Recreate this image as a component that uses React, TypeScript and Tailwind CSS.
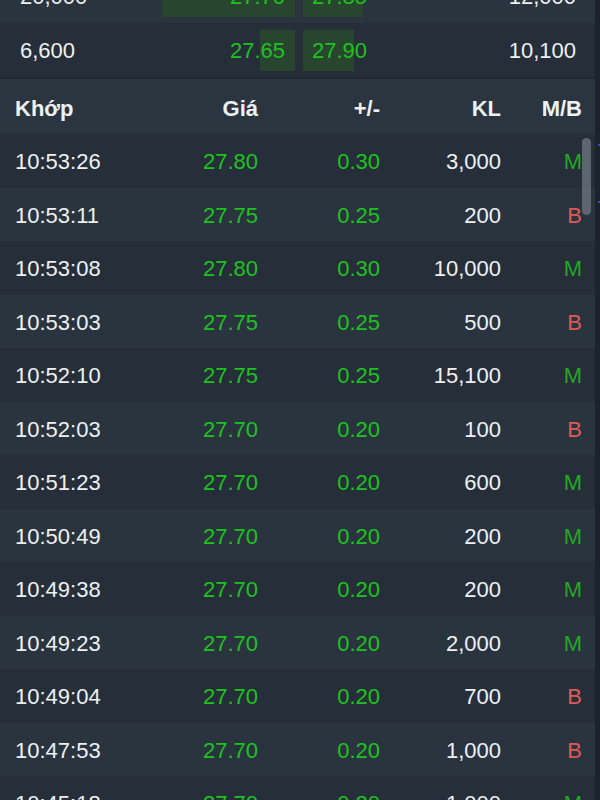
const book = [
  { bidVol: '20,000', bid: '27.70', bidBar: 133, ask: '27.85', askBar: 60, askVol: '12,000' },
  { bidVol: '6,600', bid: '27.65', bidBar: 35, ask: '27.90', askBar: 51, askVol: '10,100' },
];

const trades = [
  ['10:53:26', '27.80', '0.30', '3,000', 'M'],
  ['10:53:11', '27.75', '0.25', '200', 'B'],
  ['10:53:08', '27.80', '0.30', '10,000', 'M'],
  ['10:53:03', '27.75', '0.25', '500', 'B'],
  ['10:52:10', '27.75', '0.25', '15,100', 'M'],
  ['10:52:03', '27.70', '0.20', '100', 'B'],
  ['10:51:23', '27.70', '0.20', '600', 'M'],
  ['10:50:49', '27.70', '0.20', '200', 'M'],
  ['10:49:38', '27.70', '0.20', '200', 'M'],
  ['10:49:23', '27.70', '0.20', '2,000', 'M'],
  ['10:49:04', '27.70', '0.20', '700', 'B'],
  ['10:47:53', '27.70', '0.20', '1,000', 'B'],
  ['10:45:18', '27.70', '0.20', '1,000', 'M'],
];

const tradeGrid = 'grid grid-cols-[135px_108px_122px_121px_81px] items-center pl-[15px]';

export default function App() {
  return (
    <div
      className="relative h-[800px] w-[600px] overflow-hidden bg-[#262f39] text-[22px] text-[#eef0f2] flex"
      style={{ fontFamily: '"Liberation Sans", Arial, sans-serif' }}
    >
      <div className="flex-1 min-w-0">
        {/* Order book */}
        <div className="-mt-[31px]">
          {book.map((r, i) => (
            <div
              key={i}
              className={[
                'h-[54px] grid grid-cols-[140px_135px_8px_137px_136px] items-center pl-[20px] pt-[1px]',
                i % 2 === 0 ? 'bg-[#2a343f]' : 'bg-[#262f39]',
              ].join(' ')}
            >
              <span>{r.bidVol}</span>
              <div className="relative h-[41px] flex items-center justify-end pr-[10px] text-[#1ec21e]">
                <div
                  className="absolute right-0 top-0 h-full bg-[#284530]"
                  style={{ width: r.bidBar }}
                />
                <span className="relative">{r.bid}</span>
              </div>
              <span />
              <div className="relative h-[41px] flex items-center pl-[9px] text-[#1ec21e]">
                <div
                  className="absolute left-0 top-0 h-full bg-[#284530]"
                  style={{ width: r.askBar }}
                />
                <span className="relative">{r.ask}</span>
              </div>
              <span className="text-right">{r.askVol}</span>
            </div>
          ))}
        </div>

        <div className="h-[2px] bg-[#1f2731]" />

        {/* Trades header */}
        <div className={`${tradeGrid} h-[55px] pt-[3px] bg-[#2b3540] font-bold`}>
          <span>Khớp</span>
          <span className="text-right">Giá</span>
          <span className="text-right">+/-</span>
          <span className="text-right">KL</span>
          <span className="text-right">M/B</span>
        </div>

        {/* Trades */}
        {trades.map((t, i) => (
          <div
            key={i}
            className={[
              tradeGrid,
              'h-[53.5px] pt-[2px]',
              i % 2 === 0 ? 'bg-[#262f39]' : 'bg-[#2a343f]',
            ].join(' ')}
          >
            <span>{t[0]}</span>
            <span className="text-right text-[#1ec21e]">{t[1]}</span>
            <span className="text-right text-[#1ec21e]">{t[2]}</span>
            <span className="text-right">{t[3]}</span>
            <span className={t[4] === 'M' ? 'text-right text-[#22a822]' : 'text-right text-[#dc5a55]'}>
              {t[4]}
            </span>
          </div>
        ))}
      </div>

      {/* Scroll track */}
      <div className="relative w-[5px] bg-[#1d232b]">
        <span className="absolute left-[3px] top-[144px] h-[2px] w-[2px] bg-[#3a4bd0]" />
        <span className="absolute left-[3px] top-[201px] h-[2px] w-[2px] bg-[#3a4bd0]" />
      </div>

      <div className="absolute left-[582px] top-[138px] h-[77px] w-[9px] rounded-full bg-[#5d656e]" />
    </div>
  );
}
